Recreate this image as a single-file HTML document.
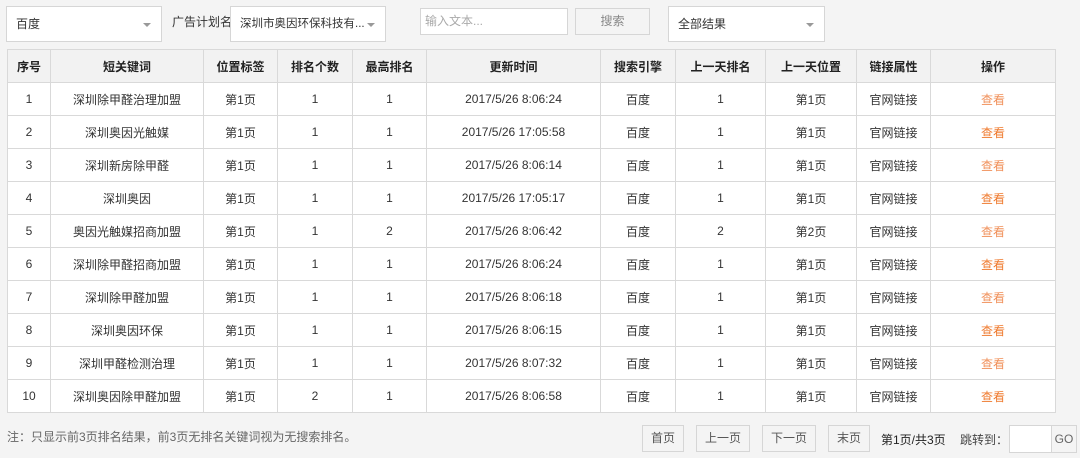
<!DOCTYPE html>
<html><head><meta charset="utf-8"><style>
*{box-sizing:border-box;margin:0;padding:0}
body{width:1080px;height:458px;background:#f4f4f4;font-family:"Liberation Sans","Noto Sans CJK SC",sans-serif;font-size:12px;color:#333;position:relative;overflow:hidden}
.a{position:absolute}
.sel{background:#fff;border:1px solid #d6d6d6;height:36px;top:6px;line-height:34px;padding-left:9px;font-size:12px;white-space:nowrap}
.sel:after{content:"";position:absolute;right:10px;top:16px;border-left:4px solid transparent;border-right:4px solid transparent;border-top:4px solid #999}
table{position:absolute;left:7px;top:49px;border-collapse:collapse;background:#fff;table-layout:fixed}
td,th{border:1px solid #d9d9d9;height:33px;text-align:center;font-size:12px;color:#333;white-space:nowrap;overflow:hidden}
th{background:#f2f2f2;font-weight:bold;color:#222}
.v{color:#f0905a}.v2{color:#ef7a2e}
.btn{position:absolute;top:425px;height:27px;border:1px solid #d6d6d6;background:#f4f4f4;text-align:center;line-height:25px;color:#555}
</style></head><body>
<div class="a sel" style="left:6px;width:156px">百度</div>
<div class="a" style="left:172px;top:13px;width:60px;overflow:hidden;white-space:nowrap">广告计划名称</div>
<div class="a sel" style="left:230px;width:156px;font-size:11.5px">深圳市奥因环保科技有...</div>
<div class="a" style="left:420px;top:8px;width:148px;height:27px;background:#fff;border:1px solid #d6d6d6;line-height:24px;padding-left:4px;color:#aaa">输入文本...</div>
<div class="a" style="left:575px;top:8px;width:75px;height:27px;border:1px solid #d6d6d6;text-align:center;line-height:24px;color:#888">搜索</div>
<div class="a sel" style="left:668px;width:157px">全部结果</div>
<table>
<colgroup><col style="width:43px"><col style="width:153px"><col style="width:74px"><col style="width:75px"><col style="width:74px"><col style="width:174px"><col style="width:75px"><col style="width:90px"><col style="width:91px"><col style="width:74px"><col style="width:125px"></colgroup>
<tr><th>序号</th><th>短关键词</th><th>位置标签</th><th>排名个数</th><th>最高排名</th><th>更新时间</th><th>搜索引擎</th><th>上一天排名</th><th>上一天位置</th><th>链接属性</th><th>操作</th></tr>
<tr><td>1</td><td>深圳除甲醛治理加盟</td><td>第1页</td><td>1</td><td>1</td><td>2017/5/26 8:06:24</td><td>百度</td><td>1</td><td>第1页</td><td>官网链接</td><td class="v">查看</td></tr>
<tr><td>2</td><td>深圳奥因光触媒</td><td>第1页</td><td>1</td><td>1</td><td>2017/5/26 17:05:58</td><td>百度</td><td>1</td><td>第1页</td><td>官网链接</td><td class="v2">查看</td></tr>
<tr><td>3</td><td>深圳新房除甲醛</td><td>第1页</td><td>1</td><td>1</td><td>2017/5/26 8:06:14</td><td>百度</td><td>1</td><td>第1页</td><td>官网链接</td><td class="v">查看</td></tr>
<tr><td>4</td><td>深圳奥因</td><td>第1页</td><td>1</td><td>1</td><td>2017/5/26 17:05:17</td><td>百度</td><td>1</td><td>第1页</td><td>官网链接</td><td class="v2">查看</td></tr>
<tr><td>5</td><td>奥因光触媒招商加盟</td><td>第1页</td><td>1</td><td>2</td><td>2017/5/26 8:06:42</td><td>百度</td><td>2</td><td>第2页</td><td>官网链接</td><td class="v">查看</td></tr>
<tr><td>6</td><td>深圳除甲醛招商加盟</td><td>第1页</td><td>1</td><td>1</td><td>2017/5/26 8:06:24</td><td>百度</td><td>1</td><td>第1页</td><td>官网链接</td><td class="v2">查看</td></tr>
<tr><td>7</td><td>深圳除甲醛加盟</td><td>第1页</td><td>1</td><td>1</td><td>2017/5/26 8:06:18</td><td>百度</td><td>1</td><td>第1页</td><td>官网链接</td><td class="v">查看</td></tr>
<tr><td>8</td><td>深圳奥因环保</td><td>第1页</td><td>1</td><td>1</td><td>2017/5/26 8:06:15</td><td>百度</td><td>1</td><td>第1页</td><td>官网链接</td><td class="v2">查看</td></tr>
<tr><td>9</td><td>深圳甲醛检测治理</td><td>第1页</td><td>1</td><td>1</td><td>2017/5/26 8:07:32</td><td>百度</td><td>1</td><td>第1页</td><td>官网链接</td><td class="v">查看</td></tr>
<tr><td>10</td><td>深圳奥因除甲醛加盟</td><td>第1页</td><td>2</td><td>1</td><td>2017/5/26 8:06:58</td><td>百度</td><td>1</td><td>第1页</td><td>官网链接</td><td class="v2">查看</td></tr>
</table>
<div class="a" style="left:7px;top:428px;color:#666">注：只显示前3页排名结果，前3页无排名关键词视为无搜索排名。</div>
<div class="btn" style="left:642px;width:42px">首页</div>
<div class="btn" style="left:696px;width:54px">上一页</div>
<div class="btn" style="left:762px;width:54px">下一页</div>
<div class="btn" style="left:828px;width:42px">末页</div>
<div class="a" style="left:881px;top:431px;color:#222">第1页/共3页</div>
<div class="a" style="left:960px;top:431px;color:#444">跳转到：</div>
<div class="a" style="left:1009px;top:425px;width:43px;height:28px;background:#fff;border:1px solid #d6d6d6"></div>
<div class="a" style="left:1051px;top:425px;width:26px;height:28px;border:1px solid #d6d6d6;text-align:center;line-height:26px;color:#666">GO</div>
</body></html>
